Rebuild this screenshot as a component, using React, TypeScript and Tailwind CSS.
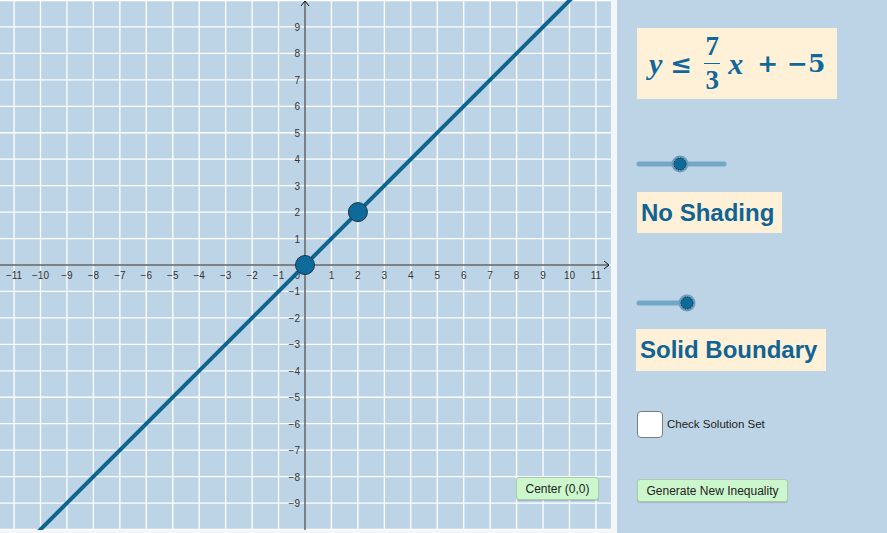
const OX = 305;
const OY = 265;
const U = 26.45;

const xTicks = Array.from({ length: 23 }, (_, i) => i - 11);
const yTicks = Array.from({ length: 21 }, (_, i) => i - 10);

const fmt = (n: number) => (n < 0 ? `\u2212${Math.abs(n)}` : `${n}`);

function Graph() {
  const W = 611;
  const H = 530;
  return (
    <svg width={W} height={H} className="block">
      <rect x={0} y={0} width={W} height={H} fill="#bcd4e6" />
      {xTicks.map((t) => (
        <line key={`vx${t}`} x1={OX + t * U} x2={OX + t * U} y1={0} y2={H} stroke="#ffffff" strokeWidth={1.3} />
      ))}
      {yTicks.map((t) => (
        <line key={`hy${t}`} x1={0} x2={W} y1={OY - t * U} y2={OY - t * U} stroke="#ffffff" strokeWidth={1.3} />
      ))}
      {/* axes */}
      <line x1={0} x2={W - 2} y1={OY} y2={OY} stroke="#111" strokeWidth={1} />
      <line x1={OX} x2={OX} y1={1} y2={H} stroke="#111" strokeWidth={1} />
      <polyline points={`${OX - 4},6 ${OX},1 ${OX + 4},6`} fill="none" stroke="#111" strokeWidth={1} />
      <polyline points={`${W - 7},${OY - 4} ${W - 2},${OY} ${W - 7},${OY + 4}`} fill="none" stroke="#111" strokeWidth={1} />
      <g fontFamily="'Liberation Sans', Arial, sans-serif" fontSize={10} fill="#333">
        {xTicks
          .filter((t) => t !== 0)
          .map((t) => (
            <text key={`lx${t}`} x={OX + t * U} y={OY + 14} textAnchor="middle">
              {fmt(t)}
            </text>
          ))}
        {yTicks
          .filter((t) => t !== 0 && Math.abs(t) < 10)
          .map((t) => (
            <text key={`ly${t}`} x={OX - 5} y={OY - t * U + 4} textAnchor="end">
              {fmt(t)}
            </text>
          ))}
        <text x={OX - 5} y={OY + 14} textAnchor="end">
          0
        </text>
      </g>
      {/* y = x */}
      <line x1={OX - 12 * U} y1={OY + 12 * U} x2={OX + 12 * U} y2={OY - 12 * U} stroke="#0f6591" strokeWidth={4} />
      <circle cx={OX} cy={OY} r={9.5} fill="#0e6a9a" stroke="#1b3340" strokeWidth={1} />
      <circle cx={OX + 2 * U} cy={OY - 2 * U} r={9.5} fill="#0e6a9a" stroke="#1b3340" strokeWidth={1} />
    </svg>
  );
}

function Slider({ width, knob }: { width: number; knob: number }) {
  return (
    <svg width={width + 12} height={18} className="block">
      <line x1={3} x2={width - 2} y1={9} y2={9} stroke="#74a6c6" strokeWidth={5} strokeLinecap="round" />
      <circle cx={knob} cy={9} r={8.5} fill="#6d9dbd" />
      <circle cx={knob} cy={9} r={6} fill="#0e6a9a" stroke="#16303d" strokeWidth={1} strokeDasharray="1.5 1" />
    </svg>
  );
}

export default function App() {
  return (
    <div className="flex h-[533px] w-[887px] bg-[#f4f6f9]">
      <div className="relative h-[530px] w-[611px]">
        <Graph />
        <button
          type="button"
          className="absolute left-[516px] top-[477px] h-[23px] w-[83px] rounded-[3px] border border-[#a7cfa7] bg-[#ccf7cc] text-[12px] text-[#222] shadow-[0_1px_1px_rgba(0,0,0,0.15)] [font-family:'Liberation_Sans',Arial,sans-serif]"
        >
          Center (0,0)
        </button>
      </div>
      <div className="ml-[6px] flex h-[533px] flex-1 flex-col bg-[#bcd4e6] pl-[19px] [font-family:'Liberation_Sans',Arial,sans-serif]">
        <div className="ml-[1px] mt-[28px] flex h-[71px] w-[200px] items-center bg-[#fff0d8] pl-[12px] text-[30px] font-bold leading-none text-[#10689a] [font-family:'Liberation_Serif','DejaVu_Serif',serif]">
          <span className="italic">y</span>
          <span className="ml-[8px] text-[26px] [font-family:'DejaVu_Serif',serif]">≤</span>
          <span className="ml-[12px] flex flex-col items-center leading-none">
            <span className="text-[27px]">7</span>
            <span className="my-[3px] h-[1.5px] w-[16px] bg-[#10689a]" />
            <span className="text-[27px]">3</span>
          </span>
          <span className="ml-[8px] italic">x</span>
          <span className="ml-[14px] text-[25px] [font-family:'DejaVu_Serif',serif]">+</span>
          <span className="ml-[9px] text-[25px] [font-family:'DejaVu_Serif',serif]">−5</span>
        </div>
        <div className="mt-[56px]">
          <Slider width={90} knob={44} />
        </div>
        <div className="ml-[1px] mt-[19px] flex h-[41px] w-[145px] items-center bg-[#fff0d8] pl-[4px] text-[24px] font-bold text-[#0f6494]">
          No Shading
        </div>
        <div className="mt-[61px]">
          <Slider width={56} knob={51} />
        </div>
        <div className="mt-[17px] flex h-[42px] w-[190px] items-center bg-[#fff0d8] pl-[4px] text-[24px] font-bold text-[#0f6494]">
          Solid Boundary
        </div>
        <div className="ml-[1px] mt-[40px] flex items-center gap-[4px]">
          <span className="h-[27px] w-[26px] rounded-[4px] border-[1.5px] border-[#767d84] bg-white" />
          <span className="text-[11.5px] text-[#222]">Check Solution Set</span>
        </div>
        <button
          type="button"
          className="ml-[1px] mt-[41px] h-[23px] w-[151px] rounded-[3px] border border-[#a7cfa7] bg-[#ccf7cc] text-[12px] text-[#222] shadow-[0_1px_1px_rgba(0,0,0,0.15)]"
        >
          Generate New Inequality
        </button>
      </div>
    </div>
  );
}
